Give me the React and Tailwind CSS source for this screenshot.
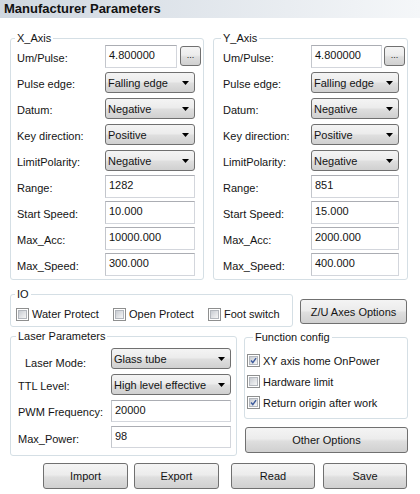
import React from "react";

const GRAD =
  "bg-[linear-gradient(to_bottom,#f4f4f4_0%,#ececec_45%,#dedede_55%,#d0d0d0_100%)]";

function TextBox({ value, w, h = "h-[23px]" }) {
  return (
    <div
      className={`${w} ${h} shrink-0 border border-[#d3d6dc] border-t-[#abadb3] border-l-[#c3c6cc] bg-white pl-[3px] pt-[2px] leading-[14px]`}
    >
      {value}
    </div>
  );
}

function Select({ value, w }) {
  return (
    <div
      className={`${w} mt-[1px] flex h-[21px] shrink-0 items-center justify-between rounded-[3px] border border-[#707070] ${GRAD} pl-[2px] pr-[5px] leading-[14px]`}
    >
      <span>{value}</span>
      <svg width="7" height="4" viewBox="0 0 7 4" className="shrink-0">
        <path d="M0 0h7L3.5 4z" fill="#000" />
      </svg>
    </div>
  );
}

function Button({ children, className = "" }) {
  return (
    <div
      className={`flex shrink-0 items-center justify-center rounded-[3px] border border-[#707070] ${GRAD} leading-[14px] ${className}`}
    >
      {children}
    </div>
  );
}

function Check({ checked, label, className = "" }) {
  return (
    <div className={`flex items-center gap-[3px] ${className}`}>
      <span className="flex h-[13px] w-[13px] shrink-0 border border-[#8e8f8f] bg-white p-[1px]">
        <span className="flex h-full w-full items-center justify-center border border-[#b3b7bd] bg-[linear-gradient(135deg,#c8ccd2,#f6f6f6)]">
          {checked && (
            <svg width="9" height="9" viewBox="0 0 9 9">
              <path
                d="M1.3 4.6 L3.6 7.2 L7.8 1.4"
                fill="none"
                stroke="#3e5b9c"
                strokeWidth="1.9"
              />
            </svg>
          )}
        </span>
      </span>
      <span className="leading-[14px]">{label}</span>
    </div>
  );
}

function Legend({ children, className = "" }) {
  return (
    <legend className={`px-[2px] leading-[13px] ${className}`}>{children}</legend>
  );
}

function Row({ label, labelW, children }) {
  return (
    <div className="flex h-[26px] items-start">
      <div className={`${labelW} shrink-0 whitespace-nowrap pt-[7px] leading-[13px]`}>
        {label}
      </div>
      {children}
    </div>
  );
}

function AxisGroup({ title, vals, cls }) {
  const { w, pl, labelW, tbW, btnGap, selW } = cls;
  return (
    <fieldset
      className={`${w} ${pl} shrink-0 rounded-[3px] border border-[#d5dfe5]`}
    >
      <Legend className="-ml-[2px]">{title}</Legend>
      <Row label="Um/Pulse:" labelW={labelW}>
        <TextBox value={vals.um} w={tbW} />
        <Button className={`${btnGap} mt-[1px] h-[20px] w-[21px] !items-end pb-[3px] text-[9px]`}>
          ...
        </Button>
      </Row>
      <Row label="Pulse edge:" labelW={labelW}>
        <Select value="Falling edge" w={selW} />
      </Row>
      <Row label="Datum:" labelW={labelW}>
        <Select value="Negative" w={selW} />
      </Row>
      <Row label="Key direction:" labelW={labelW}>
        <Select value="Positive" w={selW} />
      </Row>
      <Row label="LimitPolarity:" labelW={labelW}>
        <Select value="Negative" w={selW} />
      </Row>
      <Row label="Range:" labelW={labelW}>
        <TextBox value={vals.range} w={selW} />
      </Row>
      <Row label="Start Speed:" labelW={labelW}>
        <TextBox value={vals.start} w={selW} />
      </Row>
      <Row label="Max_Acc:" labelW={labelW}>
        <TextBox value={vals.acc} w={selW} />
      </Row>
      <Row label="Max_Speed:" labelW={labelW}>
        <TextBox value={vals.speed} w={selW} />
      </Row>
    </fieldset>
  );
}

export default function App() {
  return (
    <div className="h-[494px] w-[420px] overflow-hidden bg-white font-['Liberation_Sans',Arial,sans-serif] text-[11px] text-[#141414]">
      <div className="h-[18px] bg-[linear-gradient(to_right,#cfd7e0,#f5f7f9)] pl-[4px] text-[13px] font-bold leading-[18px] text-[#111]">
        Manufacturer Parameters
      </div>
      <div className="px-[10px]">
        <div className="mt-[14px] flex gap-[9px]">
          <AxisGroup
            title="X_Axis"
            vals={{ um: "4.800000", range: "1282", start: "10.000", acc: "10000.000", speed: "300.000" }}
            cls={{ w: "w-[194px]", pl: "pl-[6px]", labelW: "w-[88px]", tbW: "w-[72px]", btnGap: "ml-[3px]", selW: "w-[90px]" }}
          />
          <AxisGroup
            title="Y_Axis"
            vals={{ um: "4.800000", range: "851", start: "15.000", acc: "2000.000", speed: "400.000" }}
            cls={{ w: "w-[195px]", pl: "pl-[9px]", labelW: "w-[88px]", tbW: "w-[71px]", btnGap: "ml-[2px]", selW: "w-[88px]" }}
          />
        </div>

        <div className="mt-[8px] flex items-start gap-[7px]">
          <fieldset className="w-[283px] shrink-0 rounded-[3px] border border-[#d5dfe5] pb-[5px] pl-[5px]">
            <Legend className="-ml-[1px]">IO</Legend>
            <div className="flex h-[14px] items-center pt-0 mt-[6px]">
              <Check label="Water Protect" className="w-[97px]" />
              <Check label="Open Protect" className="w-[95px]" />
              <Check label="Foot switch" />
            </div>
          </fieldset>
          <Button className="mt-[11px] h-[25px] w-[107px]">Z/U Axes Options</Button>
        </div>

        <div className="mt-[3px] flex items-start gap-[7px]">
          <fieldset className="w-[227px] shrink-0 rounded-[3px] border border-[#d5dfe5] pb-[3px] pl-[7px]">
            <Legend className="-ml-[2px]">Laser Parameters</Legend>
            <div className="pt-[5px]">
              <div className="flex h-[26px] items-start">
                <div className="w-[93px] shrink-0 pl-[7px] pt-[9px] leading-[13px]">Laser Mode:</div>
                <div className="-mt-[1px]">
                  <Select value="Glass tube" w="w-[120px]" />
                </div>
              </div>
              <div className="flex h-[26px] items-start">
                <div className="w-[93px] shrink-0 pt-[6px] leading-[13px]">TTL Level:</div>
                <div className="-mt-[1px]">
                  <Select value="High level effective" w="w-[120px]" />
                </div>
              </div>
              <div className="flex h-[26px] items-start">
                <div className="w-[93px] shrink-0 whitespace-nowrap pt-[6px] leading-[13px]">PWM Frequency:</div>
                <TextBox value="20000" w="w-[120px]" h="h-[22px]" />
              </div>
              <div className="flex h-[26px] items-start">
                <div className="w-[93px] shrink-0 pt-[7px] leading-[13px]">Max_Power:</div>
                <TextBox value="98" w="w-[120px]" h="h-[22px]" />
              </div>
            </div>
          </fieldset>

          <div className="flex w-[164px] shrink-0 flex-col">
            <fieldset className="mt-[1px] rounded-[3px] border border-[#d5dfe5] pb-[5px] pl-[2px]">
              <Legend className="ml-[6px]">Function config</Legend>
              <div className="pt-[6px]">
                <div className="flex h-[21px] items-center">
                  <Check checked label="XY axis home OnPower" />
                </div>
                <div className="flex h-[21px] items-center">
                  <Check label="Hardware limit" />
                </div>
                <div className="flex h-[21px] items-center">
                  <Check checked label="Return origin after work" />
                </div>
              </div>
            </fieldset>
            <Button className="ml-[1px] mt-[8px] h-[26px] w-[163px]">Other Options</Button>
          </div>
        </div>

        <div className="mt-[7px] flex">
          <Button className="ml-[33px] h-[26px] w-[85px]">Import</Button>
          <Button className="ml-[6px] h-[26px] w-[85px]">Export</Button>
          <Button className="ml-[12px] h-[26px] w-[84px]">Read</Button>
          <Button className="ml-[8px] h-[26px] w-[84px]">Save</Button>
        </div>
      </div>
    </div>
  );
}
